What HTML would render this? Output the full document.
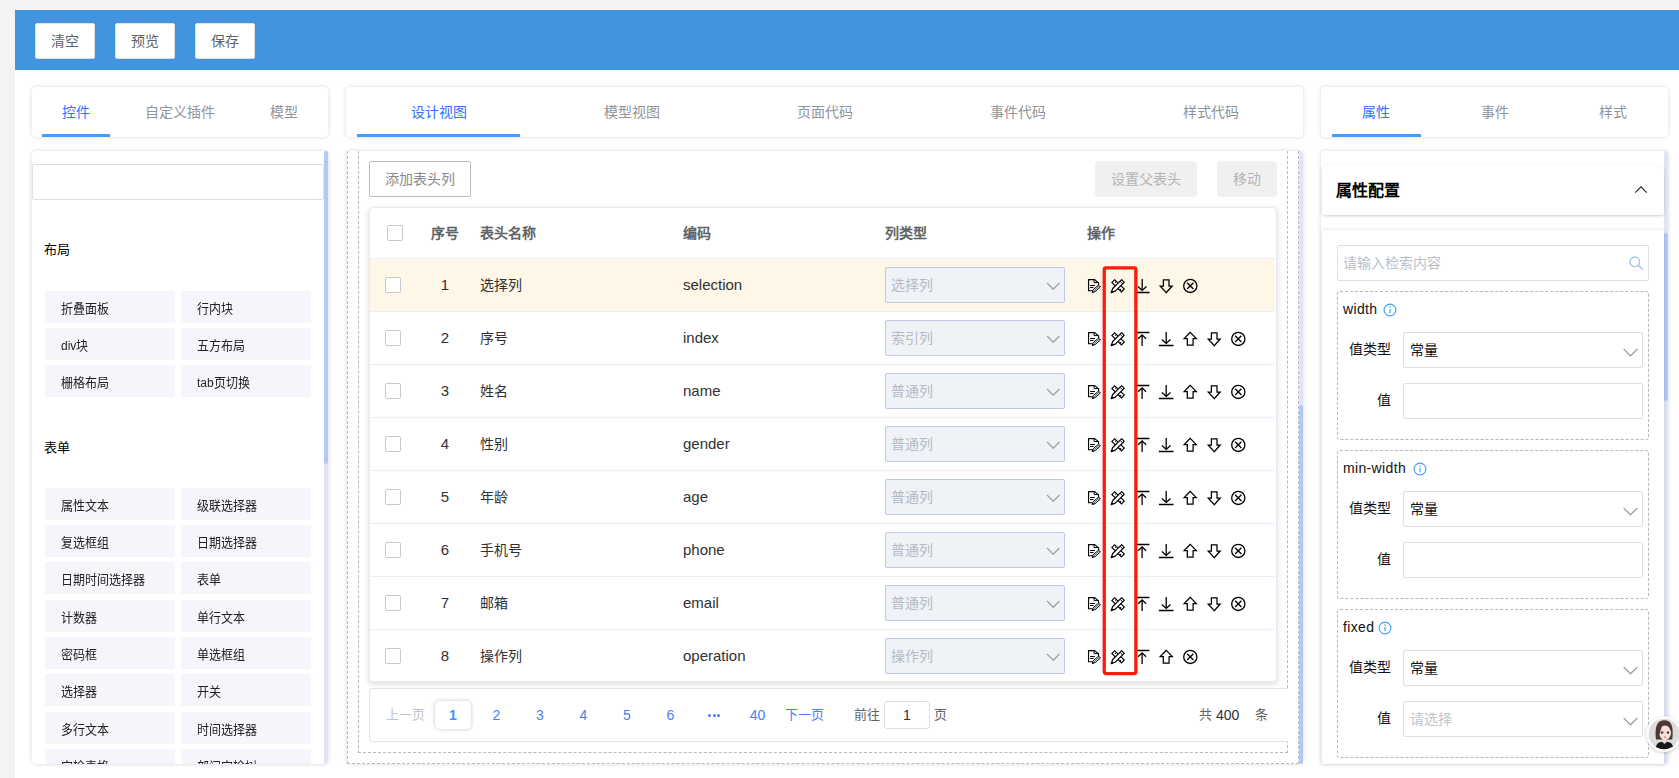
<!DOCTYPE html><html lang="zh-CN"><head><meta charset="utf-8"><title>designer</title><style>
*{box-sizing:border-box;margin:0;padding:0}
html,body{width:1679px;height:778px;overflow:hidden;background:#f3f3f3;font-family:"Liberation Sans",sans-serif;font-size:14px;color:#303133}
.a{position:absolute}
#app{position:absolute;left:15px;top:10px;width:1664px;height:768px;background:#fff}
#hdr{position:absolute;left:15px;top:10px;width:1664px;height:60px;background:#4394de}
.hb{position:absolute;top:23px;width:60px;height:36px;background:#fff;border-radius:2px;border:1px solid #dcdfe6;color:#606266;font-size:14px;line-height:34px;text-align:center}
.card{position:absolute;background:#fff;border-radius:4px;box-shadow:0 0 4px rgba(0,0,0,.16)}
.tab{position:absolute;top:87px;height:50px;line-height:50px;font-size:14px;color:#909399;text-align:center;white-space:nowrap}
.tab.on{color:#3370ff}
.bar{position:absolute;height:3px;background:#409eff;top:134px}
.sb{position:absolute;width:5px;background:#dfe5f7}
.sbt{position:absolute;width:5px;background:#b4c7f8;border-radius:2px}
.it{position:absolute;width:130px;height:32px;background:#f4f6fc;font-size:12px;line-height:32px;padding-top:2px;padding-left:16px;color:#222;white-space:nowrap;overflow:hidden}
.th{font-weight:bold;color:#606266;font-size:14px;line-height:50px;white-space:nowrap}
.td{font-size:14px;color:#303133;line-height:52px;white-space:nowrap}
.en{font-size:15px}
.sel{width:180px;height:36px;background:#eff2f7;border:1px solid #bfcae2;border-radius:2px;font-size:14px;color:#b6bac2;line-height:34px;padding-left:5px}
.chev{position:absolute;right:4px;top:14px;width:14.5px;height:8.3px}
.pg{top:688px;line-height:54px;font-size:13px;white-space:nowrap}
.pn{color:#4c7ef3;font-size:14px}
.dot{position:absolute;top:0;left:0;width:3px;height:3px;border-radius:50%;background:#4c7ef3}
.inp{width:240px;height:36px;border:1px solid #dcdfe6;border-radius:2px;background:#fff;font-size:14px;line-height:34px;color:#111;padding-left:6px;white-space:nowrap}
.it span{display:inline-block;transform:scale(1.0,1.07);transform-origin:0 55%}
.h{position:absolute;font-size:13px;color:#000;line-height:16px}
</style></head><body><div id="app"></div><div id="hdr"></div>
<div class="hb" style="left:35px">清空</div>
<div class="hb" style="left:115px">预览</div>
<div class="hb" style="left:195px">保存</div>
<div class="card" style="left:32px;top:87px;width:296px;height:50px"></div>
<div class="card" style="left:346px;top:87px;width:957px;height:50px"></div>
<div class="card" style="left:1321px;top:87px;width:347px;height:50px"></div>
<div class="tab on" style="left:16.0px;width:120px">控件</div>
<div class="tab" style="left:120.0px;width:120px">自定义插件</div>
<div class="tab" style="left:224.0px;width:120px">模型</div>
<div class="bar" style="left:42px;width:68px"></div>
<div class="tab on" style="left:378.5px;width:120px">设计视图</div>
<div class="tab" style="left:571.5px;width:120px">模型视图</div>
<div class="tab" style="left:764.5px;width:120px">页面代码</div>
<div class="tab" style="left:958.0px;width:120px">事件代码</div>
<div class="tab" style="left:1151.0px;width:120px">样式代码</div>
<div class="bar" style="left:357px;width:163px"></div>
<div class="tab on" style="left:1316.0px;width:120px">属性</div>
<div class="tab" style="left:1435.0px;width:120px">事件</div>
<div class="tab" style="left:1553.0px;width:120px">样式</div>
<div class="bar" style="left:1332px;width:89px"></div>
<div class="card" id="lp" style="left:32px;top:151px;width:296px;height:613px;overflow:hidden"></div>
<div class="card" id="cp" style="left:347px;top:151px;width:956px;height:613px;overflow:hidden"></div>
<div class="card" id="rp" style="left:1321px;top:151px;width:347px;height:613px;overflow:hidden"></div>
<div class="a" style="left:32px;top:164px;width:292px;height:36px;border:1px solid #dcdfe6;border-radius:2px;background:#fff"></div>
<div class="sb" style="left:324px;top:151px;width:4px;height:613px;border-radius:0 4px 4px 0"></div>
<div class="sbt" style="left:324px;top:151px;width:4px;height:313px"></div>
<div class="h" style="left:44px;top:242px">布局</div>
<div class="h" style="left:44px;top:440px">表单</div>
<div class="it" style="left:45px;top:291px;height:32px"><span>折叠面板</span></div>
<div class="it" style="left:181px;top:291px;height:32px"><span>行内块</span></div>
<div class="it" style="left:45px;top:328px;height:32px"><span>div块</span></div>
<div class="it" style="left:181px;top:328px;height:32px"><span>五方布局</span></div>
<div class="it" style="left:45px;top:365px;height:32px"><span>栅格布局</span></div>
<div class="it" style="left:181px;top:365px;height:32px"><span>tab页切换</span></div>
<div class="it" style="left:45px;top:488px;height:32px"><span>属性文本</span></div>
<div class="it" style="left:181px;top:488px;height:32px"><span>级联选择器</span></div>
<div class="it" style="left:45px;top:525px;height:32px"><span>复选框组</span></div>
<div class="it" style="left:181px;top:525px;height:32px"><span>日期选择器</span></div>
<div class="it" style="left:45px;top:562px;height:32px"><span>日期时间选择器</span></div>
<div class="it" style="left:181px;top:562px;height:32px"><span>表单</span></div>
<div class="it" style="left:45px;top:600px;height:32px"><span>计数器</span></div>
<div class="it" style="left:181px;top:600px;height:32px"><span>单行文本</span></div>
<div class="it" style="left:45px;top:637px;height:32px"><span>密码框</span></div>
<div class="it" style="left:181px;top:637px;height:32px"><span>单选框组</span></div>
<div class="it" style="left:45px;top:674px;height:32px"><span>选择器</span></div>
<div class="it" style="left:181px;top:674px;height:32px"><span>开关</span></div>
<div class="it" style="left:45px;top:712px;height:32px"><span>多行文本</span></div>
<div class="it" style="left:181px;top:712px;height:32px"><span>时间选择器</span></div>
<div class="it" style="left:45px;top:749px;height:15px"><span>定检表格</span></div>
<div class="it" style="left:181px;top:749px;height:15px"><span>部门定检树</span></div>
<div class="a" style="left:347px;top:151px;width:1px;height:613px;border-left:1px dashed #bababa"></div>
<div class="a" style="left:358px;top:151px;width:1px;height:602px;border-left:1px dashed #bababa"></div>
<div class="a" style="left:1287px;top:151px;width:1px;height:602px;border-left:1px dashed #bababa"></div>
<div class="a" style="left:1298px;top:151px;width:1px;height:613px;border-left:1px dashed #bababa"></div>
<div class="a" style="left:358px;top:752px;width:930px;height:1px;border-top:1px dashed #bababa"></div>
<div class="a" style="left:347px;top:763px;width:952px;height:1px;border-top:1px dashed #bababa"></div>
<div class="sb" style="left:1299px;top:151px;width:4px;height:613px;border-radius:0 4px 4px 0"></div>
<div class="sbt" style="left:1299px;top:405px;width:4px;height:359px"></div>
<div class="a" style="left:369px;top:161px;width:102px;height:36px;border:1px solid #bdbdbd;border-radius:2px;color:#8a8a8a;font-size:14px;line-height:34px;text-align:center">添加表头列</div>
<div class="a" style="left:1095px;top:161px;width:102px;height:36px;background:#f0f0f0;border-radius:4px;color:#b4b4b4;font-size:14px;line-height:36px;text-align:center">设置父表头</div>
<div class="a" style="left:1217px;top:161px;width:60px;height:36px;background:#f0f0f0;border-radius:4px;color:#b4b4b4;font-size:14px;line-height:36px;text-align:center">移动</div>
<div class="a" style="left:369px;top:207px;width:908px;height:475px;background:#fff;border:1px solid #e6eaf5;border-radius:4px;box-shadow:0 2px 6px rgba(0,0,0,.15)"></div>
<div class="a" style="left:370px;top:259px;width:905px;height:53px;background:#fef6e6"></div>
<div class="a" style="left:370px;top:258px;width:905px;height:1px;background:#ebeef5"></div>
<div class="a" style="left:370px;top:311px;width:905px;height:1px;background:#ebeef5"></div>
<div class="a" style="left:370px;top:364px;width:905px;height:1px;background:#ebeef5"></div>
<div class="a" style="left:370px;top:417px;width:905px;height:1px;background:#ebeef5"></div>
<div class="a" style="left:370px;top:470px;width:905px;height:1px;background:#ebeef5"></div>
<div class="a" style="left:370px;top:523px;width:905px;height:1px;background:#ebeef5"></div>
<div class="a" style="left:370px;top:576px;width:905px;height:1px;background:#ebeef5"></div>
<div class="a" style="left:370px;top:629px;width:905px;height:1px;background:#ebeef5"></div>
<div class="a" style="left:387px;top:225px;width:16px;height:16px;border:1px solid #c4c9d4;border-radius:2px;background:#fff"></div>
<div class="a th" style="left:431px;top:208px">序号</div>
<div class="a th" style="left:480px;top:208px">表头名称</div>
<div class="a th" style="left:683px;top:208px">编码</div>
<div class="a th" style="left:885px;top:208px">列类型</div>
<div class="a th" style="left:1087px;top:208px">操作</div>
<div class="a" style="left:385px;top:277px;width:16px;height:16px;border:1px solid #c4c9d4;border-radius:2px;background:#fff"></div>
<div class="a td en" style="left:425px;top:259px;width:40px;text-align:center">1</div>
<div class="a td" style="left:480px;top:259px">选择列</div>
<div class="a td en" style="left:683px;top:259px">selection</div>
<div class="a sel" style="left:885px;top:267px">选择列<svg class="chev" viewBox="0 0 14 8"><path d="M1 1 L7 7 L13 1" fill="none" stroke="#9a9da3" stroke-width="1.2"/></svg></div>
<div class="a" style="left:385px;top:330px;width:16px;height:16px;border:1px solid #c4c9d4;border-radius:2px;background:#fff"></div>
<div class="a td en" style="left:425px;top:312px;width:40px;text-align:center">2</div>
<div class="a td" style="left:480px;top:312px">序号</div>
<div class="a td en" style="left:683px;top:312px">index</div>
<div class="a sel" style="left:885px;top:320px">索引列<svg class="chev" viewBox="0 0 14 8"><path d="M1 1 L7 7 L13 1" fill="none" stroke="#9a9da3" stroke-width="1.2"/></svg></div>
<div class="a" style="left:385px;top:383px;width:16px;height:16px;border:1px solid #c4c9d4;border-radius:2px;background:#fff"></div>
<div class="a td en" style="left:425px;top:365px;width:40px;text-align:center">3</div>
<div class="a td" style="left:480px;top:365px">姓名</div>
<div class="a td en" style="left:683px;top:365px">name</div>
<div class="a sel" style="left:885px;top:373px">普通列<svg class="chev" viewBox="0 0 14 8"><path d="M1 1 L7 7 L13 1" fill="none" stroke="#9a9da3" stroke-width="1.2"/></svg></div>
<div class="a" style="left:385px;top:436px;width:16px;height:16px;border:1px solid #c4c9d4;border-radius:2px;background:#fff"></div>
<div class="a td en" style="left:425px;top:418px;width:40px;text-align:center">4</div>
<div class="a td" style="left:480px;top:418px">性别</div>
<div class="a td en" style="left:683px;top:418px">gender</div>
<div class="a sel" style="left:885px;top:426px">普通列<svg class="chev" viewBox="0 0 14 8"><path d="M1 1 L7 7 L13 1" fill="none" stroke="#9a9da3" stroke-width="1.2"/></svg></div>
<div class="a" style="left:385px;top:489px;width:16px;height:16px;border:1px solid #c4c9d4;border-radius:2px;background:#fff"></div>
<div class="a td en" style="left:425px;top:471px;width:40px;text-align:center">5</div>
<div class="a td" style="left:480px;top:471px">年龄</div>
<div class="a td en" style="left:683px;top:471px">age</div>
<div class="a sel" style="left:885px;top:479px">普通列<svg class="chev" viewBox="0 0 14 8"><path d="M1 1 L7 7 L13 1" fill="none" stroke="#9a9da3" stroke-width="1.2"/></svg></div>
<div class="a" style="left:385px;top:542px;width:16px;height:16px;border:1px solid #c4c9d4;border-radius:2px;background:#fff"></div>
<div class="a td en" style="left:425px;top:524px;width:40px;text-align:center">6</div>
<div class="a td" style="left:480px;top:524px">手机号</div>
<div class="a td en" style="left:683px;top:524px">phone</div>
<div class="a sel" style="left:885px;top:532px">普通列<svg class="chev" viewBox="0 0 14 8"><path d="M1 1 L7 7 L13 1" fill="none" stroke="#9a9da3" stroke-width="1.2"/></svg></div>
<div class="a" style="left:385px;top:595px;width:16px;height:16px;border:1px solid #c4c9d4;border-radius:2px;background:#fff"></div>
<div class="a td en" style="left:425px;top:577px;width:40px;text-align:center">7</div>
<div class="a td" style="left:480px;top:577px">邮箱</div>
<div class="a td en" style="left:683px;top:577px">email</div>
<div class="a sel" style="left:885px;top:585px">普通列<svg class="chev" viewBox="0 0 14 8"><path d="M1 1 L7 7 L13 1" fill="none" stroke="#9a9da3" stroke-width="1.2"/></svg></div>
<div class="a" style="left:385px;top:648px;width:16px;height:16px;border:1px solid #c4c9d4;border-radius:2px;background:#fff"></div>
<div class="a td en" style="left:425px;top:630px;width:40px;text-align:center">8</div>
<div class="a td" style="left:480px;top:630px">操作列</div>
<div class="a td en" style="left:683px;top:630px">operation</div>
<div class="a sel" style="left:885px;top:638px">操作列<svg class="chev" viewBox="0 0 14 8"><path d="M1 1 L7 7 L13 1" fill="none" stroke="#9a9da3" stroke-width="1.2"/></svg></div>
<svg class="a" style="left:1086px;top:278px" width="16" height="16" viewBox="0 0 16 16"><path d="M8.7 1.6 H2.55 V12.7 H6.3 M8.7 1.6 L12.6 4.9 V7.1" fill="none" stroke="#000" stroke-width="1.15" stroke-linejoin="round"/><path d="M8.1 1.8 V4.6 H12.4" fill="none" stroke="#000" stroke-width="1"/><path d="M4.1 7.5 H8.9 M4.1 9.5 H7.5" stroke="#000" stroke-width="1"/><path d="M6.2 14.5 L7.1 11.7 L12.6 7.1 L14.4 9 L9 13.7 Z" fill="#fff" stroke="#000" stroke-width="1" stroke-linejoin="round"/><path d="M8 12.7 L13.4 8.1" stroke="#000" stroke-width="0.65"/><path d="M6.2 14.5 L6.8 12.6 L8.1 13.9 Z" fill="#000"/></svg>
<svg class="a" style="left:1110px;top:278px" width="16" height="16" viewBox="0 0 16 16"><g transform="translate(8.06 7.8) rotate(44)"><rect x="-6.7" y="-2" width="13.4" height="4" fill="none" stroke="#000" stroke-width="1.15"/><path d="M-4.2 -2 V-0.3 M4.4 2 V0.3" stroke="#000" stroke-width="1"/></g><g transform="translate(8.06 7.8) rotate(-44.5)"><path d="M-9.7 0 L-5.7 -1.85 H6.9 V1.85 H-5.7 Z" fill="#fff" stroke="#000" stroke-width="1.15" stroke-linejoin="round"/><path d="M-9.7 0 L-7.4 -1.05 V1.05 Z" fill="#000"/><path d="M4.6 -1.85 V1.85" stroke="#000" stroke-width="0.9"/></g></svg>
<svg class="a" style="left:1134px;top:278px" width="16" height="16" viewBox="0 0 16 16"><path d="M0.9 14.5 H15.5 M8.2 0.9 V12.2 M3.9 8.4 L8.2 12.4 L12.5 8.4" fill="none" stroke="#000" stroke-width="1.3"/></svg>
<svg class="a" style="left:1158px;top:278px" width="16" height="16" viewBox="0 0 16 16"><path d="M8.2 14.7 L2.2 8 H5.4 V1.8 H11 V8 H14.2 Z" fill="none" stroke="#000" stroke-width="1.25" stroke-linejoin="miter"/></svg>
<svg class="a" style="left:1182px;top:278px" width="16" height="16" viewBox="0 0 16 16"><circle cx="8.3" cy="7.9" r="6.6" fill="none" stroke="#000" stroke-width="1.3"/><path d="M5.1 4.8 L11.4 11 M11.4 4.8 L5.1 11" stroke="#000" stroke-width="1.3"/></svg>
<svg class="a" style="left:1086px;top:331px" width="16" height="16" viewBox="0 0 16 16"><path d="M8.7 1.6 H2.55 V12.7 H6.3 M8.7 1.6 L12.6 4.9 V7.1" fill="none" stroke="#000" stroke-width="1.15" stroke-linejoin="round"/><path d="M8.1 1.8 V4.6 H12.4" fill="none" stroke="#000" stroke-width="1"/><path d="M4.1 7.5 H8.9 M4.1 9.5 H7.5" stroke="#000" stroke-width="1"/><path d="M6.2 14.5 L7.1 11.7 L12.6 7.1 L14.4 9 L9 13.7 Z" fill="#fff" stroke="#000" stroke-width="1" stroke-linejoin="round"/><path d="M8 12.7 L13.4 8.1" stroke="#000" stroke-width="0.65"/><path d="M6.2 14.5 L6.8 12.6 L8.1 13.9 Z" fill="#000"/></svg>
<svg class="a" style="left:1110px;top:331px" width="16" height="16" viewBox="0 0 16 16"><g transform="translate(8.06 7.8) rotate(44)"><rect x="-6.7" y="-2" width="13.4" height="4" fill="none" stroke="#000" stroke-width="1.15"/><path d="M-4.2 -2 V-0.3 M4.4 2 V0.3" stroke="#000" stroke-width="1"/></g><g transform="translate(8.06 7.8) rotate(-44.5)"><path d="M-9.7 0 L-5.7 -1.85 H6.9 V1.85 H-5.7 Z" fill="#fff" stroke="#000" stroke-width="1.15" stroke-linejoin="round"/><path d="M-9.7 0 L-7.4 -1.05 V1.05 Z" fill="#000"/><path d="M4.6 -1.85 V1.85" stroke="#000" stroke-width="0.9"/></g></svg>
<svg class="a" style="left:1134px;top:331px" width="16" height="16" viewBox="0 0 16 16"><path d="M0.7 1.5 H15.4 M8.1 3.6 V14.9 M4.1 7.8 L8.1 3.8 L12.1 7.8" fill="none" stroke="#000" stroke-width="1.3"/></svg>
<svg class="a" style="left:1158px;top:331px" width="16" height="16" viewBox="0 0 16 16"><path d="M0.9 14.5 H15.5 M8.2 0.9 V12.2 M3.9 8.4 L8.2 12.4 L12.5 8.4" fill="none" stroke="#000" stroke-width="1.3"/></svg>
<svg class="a" style="left:1182px;top:331px" width="16" height="16" viewBox="0 0 16 16"><path d="M8.25 1.3 L2.2 7.6 H5.3 V14.1 H11.1 V7.6 H14.3 Z" fill="none" stroke="#000" stroke-width="1.25" stroke-linejoin="miter"/></svg>
<svg class="a" style="left:1206px;top:331px" width="16" height="16" viewBox="0 0 16 16"><path d="M8.2 14.7 L2.2 8 H5.4 V1.8 H11 V8 H14.2 Z" fill="none" stroke="#000" stroke-width="1.25" stroke-linejoin="miter"/></svg>
<svg class="a" style="left:1230px;top:331px" width="16" height="16" viewBox="0 0 16 16"><circle cx="8.3" cy="7.9" r="6.6" fill="none" stroke="#000" stroke-width="1.3"/><path d="M5.1 4.8 L11.4 11 M11.4 4.8 L5.1 11" stroke="#000" stroke-width="1.3"/></svg>
<svg class="a" style="left:1086px;top:384px" width="16" height="16" viewBox="0 0 16 16"><path d="M8.7 1.6 H2.55 V12.7 H6.3 M8.7 1.6 L12.6 4.9 V7.1" fill="none" stroke="#000" stroke-width="1.15" stroke-linejoin="round"/><path d="M8.1 1.8 V4.6 H12.4" fill="none" stroke="#000" stroke-width="1"/><path d="M4.1 7.5 H8.9 M4.1 9.5 H7.5" stroke="#000" stroke-width="1"/><path d="M6.2 14.5 L7.1 11.7 L12.6 7.1 L14.4 9 L9 13.7 Z" fill="#fff" stroke="#000" stroke-width="1" stroke-linejoin="round"/><path d="M8 12.7 L13.4 8.1" stroke="#000" stroke-width="0.65"/><path d="M6.2 14.5 L6.8 12.6 L8.1 13.9 Z" fill="#000"/></svg>
<svg class="a" style="left:1110px;top:384px" width="16" height="16" viewBox="0 0 16 16"><g transform="translate(8.06 7.8) rotate(44)"><rect x="-6.7" y="-2" width="13.4" height="4" fill="none" stroke="#000" stroke-width="1.15"/><path d="M-4.2 -2 V-0.3 M4.4 2 V0.3" stroke="#000" stroke-width="1"/></g><g transform="translate(8.06 7.8) rotate(-44.5)"><path d="M-9.7 0 L-5.7 -1.85 H6.9 V1.85 H-5.7 Z" fill="#fff" stroke="#000" stroke-width="1.15" stroke-linejoin="round"/><path d="M-9.7 0 L-7.4 -1.05 V1.05 Z" fill="#000"/><path d="M4.6 -1.85 V1.85" stroke="#000" stroke-width="0.9"/></g></svg>
<svg class="a" style="left:1134px;top:384px" width="16" height="16" viewBox="0 0 16 16"><path d="M0.7 1.5 H15.4 M8.1 3.6 V14.9 M4.1 7.8 L8.1 3.8 L12.1 7.8" fill="none" stroke="#000" stroke-width="1.3"/></svg>
<svg class="a" style="left:1158px;top:384px" width="16" height="16" viewBox="0 0 16 16"><path d="M0.9 14.5 H15.5 M8.2 0.9 V12.2 M3.9 8.4 L8.2 12.4 L12.5 8.4" fill="none" stroke="#000" stroke-width="1.3"/></svg>
<svg class="a" style="left:1182px;top:384px" width="16" height="16" viewBox="0 0 16 16"><path d="M8.25 1.3 L2.2 7.6 H5.3 V14.1 H11.1 V7.6 H14.3 Z" fill="none" stroke="#000" stroke-width="1.25" stroke-linejoin="miter"/></svg>
<svg class="a" style="left:1206px;top:384px" width="16" height="16" viewBox="0 0 16 16"><path d="M8.2 14.7 L2.2 8 H5.4 V1.8 H11 V8 H14.2 Z" fill="none" stroke="#000" stroke-width="1.25" stroke-linejoin="miter"/></svg>
<svg class="a" style="left:1230px;top:384px" width="16" height="16" viewBox="0 0 16 16"><circle cx="8.3" cy="7.9" r="6.6" fill="none" stroke="#000" stroke-width="1.3"/><path d="M5.1 4.8 L11.4 11 M11.4 4.8 L5.1 11" stroke="#000" stroke-width="1.3"/></svg>
<svg class="a" style="left:1086px;top:437px" width="16" height="16" viewBox="0 0 16 16"><path d="M8.7 1.6 H2.55 V12.7 H6.3 M8.7 1.6 L12.6 4.9 V7.1" fill="none" stroke="#000" stroke-width="1.15" stroke-linejoin="round"/><path d="M8.1 1.8 V4.6 H12.4" fill="none" stroke="#000" stroke-width="1"/><path d="M4.1 7.5 H8.9 M4.1 9.5 H7.5" stroke="#000" stroke-width="1"/><path d="M6.2 14.5 L7.1 11.7 L12.6 7.1 L14.4 9 L9 13.7 Z" fill="#fff" stroke="#000" stroke-width="1" stroke-linejoin="round"/><path d="M8 12.7 L13.4 8.1" stroke="#000" stroke-width="0.65"/><path d="M6.2 14.5 L6.8 12.6 L8.1 13.9 Z" fill="#000"/></svg>
<svg class="a" style="left:1110px;top:437px" width="16" height="16" viewBox="0 0 16 16"><g transform="translate(8.06 7.8) rotate(44)"><rect x="-6.7" y="-2" width="13.4" height="4" fill="none" stroke="#000" stroke-width="1.15"/><path d="M-4.2 -2 V-0.3 M4.4 2 V0.3" stroke="#000" stroke-width="1"/></g><g transform="translate(8.06 7.8) rotate(-44.5)"><path d="M-9.7 0 L-5.7 -1.85 H6.9 V1.85 H-5.7 Z" fill="#fff" stroke="#000" stroke-width="1.15" stroke-linejoin="round"/><path d="M-9.7 0 L-7.4 -1.05 V1.05 Z" fill="#000"/><path d="M4.6 -1.85 V1.85" stroke="#000" stroke-width="0.9"/></g></svg>
<svg class="a" style="left:1134px;top:437px" width="16" height="16" viewBox="0 0 16 16"><path d="M0.7 1.5 H15.4 M8.1 3.6 V14.9 M4.1 7.8 L8.1 3.8 L12.1 7.8" fill="none" stroke="#000" stroke-width="1.3"/></svg>
<svg class="a" style="left:1158px;top:437px" width="16" height="16" viewBox="0 0 16 16"><path d="M0.9 14.5 H15.5 M8.2 0.9 V12.2 M3.9 8.4 L8.2 12.4 L12.5 8.4" fill="none" stroke="#000" stroke-width="1.3"/></svg>
<svg class="a" style="left:1182px;top:437px" width="16" height="16" viewBox="0 0 16 16"><path d="M8.25 1.3 L2.2 7.6 H5.3 V14.1 H11.1 V7.6 H14.3 Z" fill="none" stroke="#000" stroke-width="1.25" stroke-linejoin="miter"/></svg>
<svg class="a" style="left:1206px;top:437px" width="16" height="16" viewBox="0 0 16 16"><path d="M8.2 14.7 L2.2 8 H5.4 V1.8 H11 V8 H14.2 Z" fill="none" stroke="#000" stroke-width="1.25" stroke-linejoin="miter"/></svg>
<svg class="a" style="left:1230px;top:437px" width="16" height="16" viewBox="0 0 16 16"><circle cx="8.3" cy="7.9" r="6.6" fill="none" stroke="#000" stroke-width="1.3"/><path d="M5.1 4.8 L11.4 11 M11.4 4.8 L5.1 11" stroke="#000" stroke-width="1.3"/></svg>
<svg class="a" style="left:1086px;top:490px" width="16" height="16" viewBox="0 0 16 16"><path d="M8.7 1.6 H2.55 V12.7 H6.3 M8.7 1.6 L12.6 4.9 V7.1" fill="none" stroke="#000" stroke-width="1.15" stroke-linejoin="round"/><path d="M8.1 1.8 V4.6 H12.4" fill="none" stroke="#000" stroke-width="1"/><path d="M4.1 7.5 H8.9 M4.1 9.5 H7.5" stroke="#000" stroke-width="1"/><path d="M6.2 14.5 L7.1 11.7 L12.6 7.1 L14.4 9 L9 13.7 Z" fill="#fff" stroke="#000" stroke-width="1" stroke-linejoin="round"/><path d="M8 12.7 L13.4 8.1" stroke="#000" stroke-width="0.65"/><path d="M6.2 14.5 L6.8 12.6 L8.1 13.9 Z" fill="#000"/></svg>
<svg class="a" style="left:1110px;top:490px" width="16" height="16" viewBox="0 0 16 16"><g transform="translate(8.06 7.8) rotate(44)"><rect x="-6.7" y="-2" width="13.4" height="4" fill="none" stroke="#000" stroke-width="1.15"/><path d="M-4.2 -2 V-0.3 M4.4 2 V0.3" stroke="#000" stroke-width="1"/></g><g transform="translate(8.06 7.8) rotate(-44.5)"><path d="M-9.7 0 L-5.7 -1.85 H6.9 V1.85 H-5.7 Z" fill="#fff" stroke="#000" stroke-width="1.15" stroke-linejoin="round"/><path d="M-9.7 0 L-7.4 -1.05 V1.05 Z" fill="#000"/><path d="M4.6 -1.85 V1.85" stroke="#000" stroke-width="0.9"/></g></svg>
<svg class="a" style="left:1134px;top:490px" width="16" height="16" viewBox="0 0 16 16"><path d="M0.7 1.5 H15.4 M8.1 3.6 V14.9 M4.1 7.8 L8.1 3.8 L12.1 7.8" fill="none" stroke="#000" stroke-width="1.3"/></svg>
<svg class="a" style="left:1158px;top:490px" width="16" height="16" viewBox="0 0 16 16"><path d="M0.9 14.5 H15.5 M8.2 0.9 V12.2 M3.9 8.4 L8.2 12.4 L12.5 8.4" fill="none" stroke="#000" stroke-width="1.3"/></svg>
<svg class="a" style="left:1182px;top:490px" width="16" height="16" viewBox="0 0 16 16"><path d="M8.25 1.3 L2.2 7.6 H5.3 V14.1 H11.1 V7.6 H14.3 Z" fill="none" stroke="#000" stroke-width="1.25" stroke-linejoin="miter"/></svg>
<svg class="a" style="left:1206px;top:490px" width="16" height="16" viewBox="0 0 16 16"><path d="M8.2 14.7 L2.2 8 H5.4 V1.8 H11 V8 H14.2 Z" fill="none" stroke="#000" stroke-width="1.25" stroke-linejoin="miter"/></svg>
<svg class="a" style="left:1230px;top:490px" width="16" height="16" viewBox="0 0 16 16"><circle cx="8.3" cy="7.9" r="6.6" fill="none" stroke="#000" stroke-width="1.3"/><path d="M5.1 4.8 L11.4 11 M11.4 4.8 L5.1 11" stroke="#000" stroke-width="1.3"/></svg>
<svg class="a" style="left:1086px;top:543px" width="16" height="16" viewBox="0 0 16 16"><path d="M8.7 1.6 H2.55 V12.7 H6.3 M8.7 1.6 L12.6 4.9 V7.1" fill="none" stroke="#000" stroke-width="1.15" stroke-linejoin="round"/><path d="M8.1 1.8 V4.6 H12.4" fill="none" stroke="#000" stroke-width="1"/><path d="M4.1 7.5 H8.9 M4.1 9.5 H7.5" stroke="#000" stroke-width="1"/><path d="M6.2 14.5 L7.1 11.7 L12.6 7.1 L14.4 9 L9 13.7 Z" fill="#fff" stroke="#000" stroke-width="1" stroke-linejoin="round"/><path d="M8 12.7 L13.4 8.1" stroke="#000" stroke-width="0.65"/><path d="M6.2 14.5 L6.8 12.6 L8.1 13.9 Z" fill="#000"/></svg>
<svg class="a" style="left:1110px;top:543px" width="16" height="16" viewBox="0 0 16 16"><g transform="translate(8.06 7.8) rotate(44)"><rect x="-6.7" y="-2" width="13.4" height="4" fill="none" stroke="#000" stroke-width="1.15"/><path d="M-4.2 -2 V-0.3 M4.4 2 V0.3" stroke="#000" stroke-width="1"/></g><g transform="translate(8.06 7.8) rotate(-44.5)"><path d="M-9.7 0 L-5.7 -1.85 H6.9 V1.85 H-5.7 Z" fill="#fff" stroke="#000" stroke-width="1.15" stroke-linejoin="round"/><path d="M-9.7 0 L-7.4 -1.05 V1.05 Z" fill="#000"/><path d="M4.6 -1.85 V1.85" stroke="#000" stroke-width="0.9"/></g></svg>
<svg class="a" style="left:1134px;top:543px" width="16" height="16" viewBox="0 0 16 16"><path d="M0.7 1.5 H15.4 M8.1 3.6 V14.9 M4.1 7.8 L8.1 3.8 L12.1 7.8" fill="none" stroke="#000" stroke-width="1.3"/></svg>
<svg class="a" style="left:1158px;top:543px" width="16" height="16" viewBox="0 0 16 16"><path d="M0.9 14.5 H15.5 M8.2 0.9 V12.2 M3.9 8.4 L8.2 12.4 L12.5 8.4" fill="none" stroke="#000" stroke-width="1.3"/></svg>
<svg class="a" style="left:1182px;top:543px" width="16" height="16" viewBox="0 0 16 16"><path d="M8.25 1.3 L2.2 7.6 H5.3 V14.1 H11.1 V7.6 H14.3 Z" fill="none" stroke="#000" stroke-width="1.25" stroke-linejoin="miter"/></svg>
<svg class="a" style="left:1206px;top:543px" width="16" height="16" viewBox="0 0 16 16"><path d="M8.2 14.7 L2.2 8 H5.4 V1.8 H11 V8 H14.2 Z" fill="none" stroke="#000" stroke-width="1.25" stroke-linejoin="miter"/></svg>
<svg class="a" style="left:1230px;top:543px" width="16" height="16" viewBox="0 0 16 16"><circle cx="8.3" cy="7.9" r="6.6" fill="none" stroke="#000" stroke-width="1.3"/><path d="M5.1 4.8 L11.4 11 M11.4 4.8 L5.1 11" stroke="#000" stroke-width="1.3"/></svg>
<svg class="a" style="left:1086px;top:596px" width="16" height="16" viewBox="0 0 16 16"><path d="M8.7 1.6 H2.55 V12.7 H6.3 M8.7 1.6 L12.6 4.9 V7.1" fill="none" stroke="#000" stroke-width="1.15" stroke-linejoin="round"/><path d="M8.1 1.8 V4.6 H12.4" fill="none" stroke="#000" stroke-width="1"/><path d="M4.1 7.5 H8.9 M4.1 9.5 H7.5" stroke="#000" stroke-width="1"/><path d="M6.2 14.5 L7.1 11.7 L12.6 7.1 L14.4 9 L9 13.7 Z" fill="#fff" stroke="#000" stroke-width="1" stroke-linejoin="round"/><path d="M8 12.7 L13.4 8.1" stroke="#000" stroke-width="0.65"/><path d="M6.2 14.5 L6.8 12.6 L8.1 13.9 Z" fill="#000"/></svg>
<svg class="a" style="left:1110px;top:596px" width="16" height="16" viewBox="0 0 16 16"><g transform="translate(8.06 7.8) rotate(44)"><rect x="-6.7" y="-2" width="13.4" height="4" fill="none" stroke="#000" stroke-width="1.15"/><path d="M-4.2 -2 V-0.3 M4.4 2 V0.3" stroke="#000" stroke-width="1"/></g><g transform="translate(8.06 7.8) rotate(-44.5)"><path d="M-9.7 0 L-5.7 -1.85 H6.9 V1.85 H-5.7 Z" fill="#fff" stroke="#000" stroke-width="1.15" stroke-linejoin="round"/><path d="M-9.7 0 L-7.4 -1.05 V1.05 Z" fill="#000"/><path d="M4.6 -1.85 V1.85" stroke="#000" stroke-width="0.9"/></g></svg>
<svg class="a" style="left:1134px;top:596px" width="16" height="16" viewBox="0 0 16 16"><path d="M0.7 1.5 H15.4 M8.1 3.6 V14.9 M4.1 7.8 L8.1 3.8 L12.1 7.8" fill="none" stroke="#000" stroke-width="1.3"/></svg>
<svg class="a" style="left:1158px;top:596px" width="16" height="16" viewBox="0 0 16 16"><path d="M0.9 14.5 H15.5 M8.2 0.9 V12.2 M3.9 8.4 L8.2 12.4 L12.5 8.4" fill="none" stroke="#000" stroke-width="1.3"/></svg>
<svg class="a" style="left:1182px;top:596px" width="16" height="16" viewBox="0 0 16 16"><path d="M8.25 1.3 L2.2 7.6 H5.3 V14.1 H11.1 V7.6 H14.3 Z" fill="none" stroke="#000" stroke-width="1.25" stroke-linejoin="miter"/></svg>
<svg class="a" style="left:1206px;top:596px" width="16" height="16" viewBox="0 0 16 16"><path d="M8.2 14.7 L2.2 8 H5.4 V1.8 H11 V8 H14.2 Z" fill="none" stroke="#000" stroke-width="1.25" stroke-linejoin="miter"/></svg>
<svg class="a" style="left:1230px;top:596px" width="16" height="16" viewBox="0 0 16 16"><circle cx="8.3" cy="7.9" r="6.6" fill="none" stroke="#000" stroke-width="1.3"/><path d="M5.1 4.8 L11.4 11 M11.4 4.8 L5.1 11" stroke="#000" stroke-width="1.3"/></svg>
<svg class="a" style="left:1086px;top:649px" width="16" height="16" viewBox="0 0 16 16"><path d="M8.7 1.6 H2.55 V12.7 H6.3 M8.7 1.6 L12.6 4.9 V7.1" fill="none" stroke="#000" stroke-width="1.15" stroke-linejoin="round"/><path d="M8.1 1.8 V4.6 H12.4" fill="none" stroke="#000" stroke-width="1"/><path d="M4.1 7.5 H8.9 M4.1 9.5 H7.5" stroke="#000" stroke-width="1"/><path d="M6.2 14.5 L7.1 11.7 L12.6 7.1 L14.4 9 L9 13.7 Z" fill="#fff" stroke="#000" stroke-width="1" stroke-linejoin="round"/><path d="M8 12.7 L13.4 8.1" stroke="#000" stroke-width="0.65"/><path d="M6.2 14.5 L6.8 12.6 L8.1 13.9 Z" fill="#000"/></svg>
<svg class="a" style="left:1110px;top:649px" width="16" height="16" viewBox="0 0 16 16"><g transform="translate(8.06 7.8) rotate(44)"><rect x="-6.7" y="-2" width="13.4" height="4" fill="none" stroke="#000" stroke-width="1.15"/><path d="M-4.2 -2 V-0.3 M4.4 2 V0.3" stroke="#000" stroke-width="1"/></g><g transform="translate(8.06 7.8) rotate(-44.5)"><path d="M-9.7 0 L-5.7 -1.85 H6.9 V1.85 H-5.7 Z" fill="#fff" stroke="#000" stroke-width="1.15" stroke-linejoin="round"/><path d="M-9.7 0 L-7.4 -1.05 V1.05 Z" fill="#000"/><path d="M4.6 -1.85 V1.85" stroke="#000" stroke-width="0.9"/></g></svg>
<svg class="a" style="left:1134px;top:649px" width="16" height="16" viewBox="0 0 16 16"><path d="M0.7 1.5 H15.4 M8.1 3.6 V14.9 M4.1 7.8 L8.1 3.8 L12.1 7.8" fill="none" stroke="#000" stroke-width="1.3"/></svg>
<svg class="a" style="left:1158px;top:649px" width="16" height="16" viewBox="0 0 16 16"><path d="M8.25 1.3 L2.2 7.6 H5.3 V14.1 H11.1 V7.6 H14.3 Z" fill="none" stroke="#000" stroke-width="1.25" stroke-linejoin="miter"/></svg>
<svg class="a" style="left:1182px;top:649px" width="16" height="16" viewBox="0 0 16 16"><circle cx="8.3" cy="7.9" r="6.6" fill="none" stroke="#000" stroke-width="1.3"/><path d="M5.1 4.8 L11.4 11 M11.4 4.8 L5.1 11" stroke="#000" stroke-width="1.3"/></svg>
<svg class="a" style="left:1095px;top:260px" width="50" height="420" viewBox="0 0 50 420"><rect x="9.25" y="7.85" width="31.6" height="405.8" rx="1.8" fill="none" stroke="#fd1b0c" stroke-width="3.3"/></svg>
<div class="a" style="left:369px;top:688px;width:919px;height:54px;background:#fff;border:1px solid #e2e2e2;border-right:none;border-radius:4px 0 0 4px"></div>
<div class="a pg" style="left:386px;color:#c0c4cc">上一页</div>
<div class="a" style="left:435px;top:701px;width:36px;height:28px;background:#fff;border-radius:5px;box-shadow:0 0 4px rgba(0,0,0,.22)"></div>
<div class="a pg pn" style="left:433.0px;width:40px;text-align:center;font-weight:bold;color:#3f94fb;">1</div>
<div class="a pg pn" style="left:476.5px;width:40px;text-align:center;">2</div>
<div class="a pg pn" style="left:520.0px;width:40px;text-align:center;">3</div>
<div class="a pg pn" style="left:563.5px;width:40px;text-align:center;">4</div>
<div class="a pg pn" style="left:607.0px;width:40px;text-align:center;">5</div>
<div class="a pg pn" style="left:650.5px;width:40px;text-align:center;">6</div>
<div class="a" style="left:708.0px;top:714px;width:12px;height:3px"><i class="dot"></i><i class="dot" style="left:4.5px"></i><i class="dot" style="left:9px"></i></div>
<div class="a pg pn" style="left:737.5px;width:40px;text-align:center;">40</div>
<div class="a pg" style="left:785px;color:#4c7ef3">下一页</div>
<div class="a pg" style="left:854px;color:#606266">前往</div>
<div class="a" style="left:884px;top:701px;width:46px;height:28px;border:1px solid #dcdfe6;border-radius:3px;background:#fff;text-align:center;line-height:27px;font-size:14px;color:#303133">1</div>
<div class="a pg" style="left:934px;color:#606266">页</div>
<div class="a pg" style="left:1199px;color:#606266">共</div>
<div class="a pg" style="left:1216px;color:#303133;font-size:14px">400</div>
<div class="a pg" style="left:1255px;color:#606266">条</div>
<div class="sb" style="left:1664px;top:151px;width:4px;height:613px;border-radius:0 4px 4px 0"></div>
<div class="sbt" style="left:1664px;top:233px;width:4px;height:168px"></div>
<div class="a" style="left:1322px;top:165px;width:342px;height:50px;background:#fff;border-radius:5px 5px 3px 3px;box-shadow:0 1px 3px rgba(0,0,0,.2)"></div>
<div class="a" style="left:1336px;top:166px;line-height:49px;font-size:16px;font-weight:bold;color:#000">属性配置</div>
<svg class="a" style="left:1634px;top:185px" width="14" height="9" viewBox="0 0 14 9"><path d="M1.2 7.7 L7 1.8 L12.8 7.7" fill="none" stroke="#222" stroke-width="1.05"/></svg>
<div class="a" style="left:1322px;top:230px;width:342px;height:534px;background:#fff;box-shadow:0 0 3px rgba(0,0,0,.16)"></div>
<div class="a" style="left:1337px;top:245px;width:312px;height:36px;border:1px solid #dcdfe6;border-radius:2px;background:#fff;font-size:14px;color:#babec6;line-height:35px;padding-left:5px">请输入检索内容</div>
<svg class="a" style="left:1628px;top:255px" width="16" height="16" viewBox="0 0 16 16"><circle cx="6.8" cy="6.8" r="4.8" fill="none" stroke="#a6c0f3" stroke-width="1.3"/><path d="M10.3 10.3 L14.8 14.8" stroke="#a6c0f3" stroke-width="1.3"/></svg>
<div class="a" style="left:1337px;top:291px;width:312px;height:149px;border:1px dashed #b8b8b8;border-radius:3px"></div>
<div class="a" style="left:1343px;top:299px;font-size:14px;letter-spacing:0.35px;line-height:21px;color:#111;white-space:nowrap">width</div>
<svg class="a" style="left:1383px;top:303px" width="14" height="14" viewBox="0 0 14 14"><circle cx="7" cy="7" r="5.9" fill="none" stroke="#409eff" stroke-width="1.1"/><path d="M7 6 V10.2" stroke="#409eff" stroke-width="1.2"/><circle cx="7" cy="4" r="0.8" fill="#409eff"/></svg>
<div class="a" style="left:1349px;top:332px;font-size:14px;line-height:35px;color:#111">值类型</div>
<div class="a inp" style="left:1403px;top:332px">常量<svg class="a" style="right:4px;top:14.5px" width="15" height="9" viewBox="0 0 15 9"><path d="M0.6 1 L7.5 7.8 L14.4 1" fill="none" stroke="#9c9ea3" stroke-width="1.2"/></svg></div>
<div class="a" style="left:1377px;top:383px;font-size:14px;line-height:35px;color:#111">值</div>
<div class="a inp" style="left:1403px;top:383px"></div>
<div class="a" style="left:1337px;top:450px;width:312px;height:149px;border:1px dashed #b8b8b8;border-radius:3px"></div>
<div class="a" style="left:1343px;top:458px;font-size:14px;letter-spacing:0.35px;line-height:21px;color:#111;white-space:nowrap">min-width</div>
<svg class="a" style="left:1413px;top:462px" width="14" height="14" viewBox="0 0 14 14"><circle cx="7" cy="7" r="5.9" fill="none" stroke="#409eff" stroke-width="1.1"/><path d="M7 6 V10.2" stroke="#409eff" stroke-width="1.2"/><circle cx="7" cy="4" r="0.8" fill="#409eff"/></svg>
<div class="a" style="left:1349px;top:491px;font-size:14px;line-height:35px;color:#111">值类型</div>
<div class="a inp" style="left:1403px;top:491px">常量<svg class="a" style="right:4px;top:14.5px" width="15" height="9" viewBox="0 0 15 9"><path d="M0.6 1 L7.5 7.8 L14.4 1" fill="none" stroke="#9c9ea3" stroke-width="1.2"/></svg></div>
<div class="a" style="left:1377px;top:542px;font-size:14px;line-height:35px;color:#111">值</div>
<div class="a inp" style="left:1403px;top:542px"></div>
<div class="a" style="left:1337px;top:609px;width:312px;height:149px;border:1px dashed #b8b8b8;border-radius:3px"></div>
<div class="a" style="left:1343px;top:617px;font-size:14px;letter-spacing:0.35px;line-height:21px;color:#111;white-space:nowrap">fixed</div>
<svg class="a" style="left:1378px;top:621px" width="14" height="14" viewBox="0 0 14 14"><circle cx="7" cy="7" r="5.9" fill="none" stroke="#409eff" stroke-width="1.1"/><path d="M7 6 V10.2" stroke="#409eff" stroke-width="1.2"/><circle cx="7" cy="4" r="0.8" fill="#409eff"/></svg>
<div class="a" style="left:1349px;top:650px;font-size:14px;line-height:35px;color:#111">值类型</div>
<div class="a inp" style="left:1403px;top:650px">常量<svg class="a" style="right:4px;top:14.5px" width="15" height="9" viewBox="0 0 15 9"><path d="M0.6 1 L7.5 7.8 L14.4 1" fill="none" stroke="#9c9ea3" stroke-width="1.2"/></svg></div>
<div class="a" style="left:1377px;top:701px;font-size:14px;line-height:35px;color:#111">值</div>
<div class="a inp" style="left:1403px;top:701px;color:#c0c4cc">请选择<svg class="a" style="right:4px;top:14.5px" width="15" height="9" viewBox="0 0 15 9"><path d="M0.6 1 L7.5 7.8 L14.4 1" fill="none" stroke="#9c9ea3" stroke-width="1.2"/></svg></div>
<svg class="a" style="left:1644px;top:714px;overflow:visible" width="35" height="40" viewBox="0 0 35 40"><defs><clipPath id="av"><circle cx="20" cy="20" r="15.3"/></clipPath><filter id="avs" x="-30%" y="-30%" width="160%" height="160%"><feGaussianBlur stdDeviation="1.6"/></filter></defs><circle cx="20" cy="20.8" r="18" fill="#000" opacity=".22" filter="url(#avs)"/><circle cx="20" cy="20" r="18" fill="#fbfbfb"/><circle cx="20" cy="20" r="15.3" fill="#dcdcdc"/><g clip-path="url(#av)"><path d="M12 25.5 C10 10 15 6.3 20.5 6.3 C26.5 6.3 30 11 28.3 25.5 L24 25.5 L16 25.5 Z" fill="#4b3835"/><rect x="18.3" y="23" width="4.4" height="6" fill="#f3d3c8"/><ellipse cx="21" cy="18.6" rx="6.1" ry="7.2" fill="#f8dfd7"/><path d="M13.6 19 C13.4 11 17 8.2 21 8.2 C18.8 10.5 16.3 14.5 14.8 25 L12.4 25 Z" fill="#4b3835"/><path d="M21 8.2 C25.5 8 28.3 11.5 27.6 20 C26.8 15.5 24.5 11 21 8.2 Z" fill="#4b3835"/><ellipse cx="18.1" cy="18.6" rx="1.35" ry="1.1" fill="#2a2226"/><ellipse cx="24" cy="18.6" rx="1.35" ry="1.1" fill="#2a2226"/><ellipse cx="21.1" cy="23.1" rx="1.2" ry="0.6" fill="#e2574f"/><path d="M11.5 36 C11.5 29.5 15 28.3 18 27.8 L20.5 30 L23 27.8 C26 28.3 29.5 29.5 29.5 36 Z" fill="#18171a"/></g></svg></body></html>
